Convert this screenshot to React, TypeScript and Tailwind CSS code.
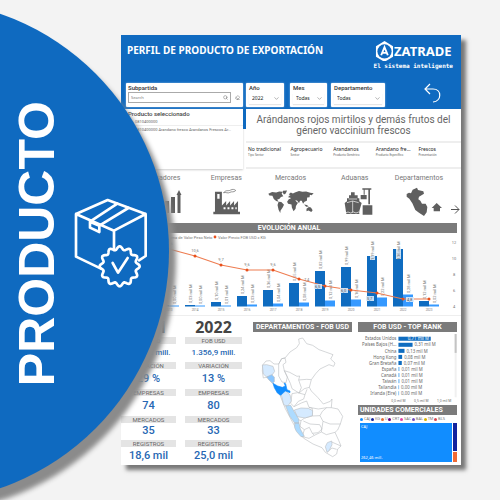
import React from "react";
import { ChevronDown, Search, Eraser } from "lucide-react";

const SANS = "font-['Noto_Sans','Open_Sans',sans-serif]";
const DIN = "font-[Roboto,'Noto_Sans',sans-serif]";

const subHeads = [
  ["No tradicional", "Tipo Sector"],
  ["Agropecuario", "Sector"],
  ["Arandanos", "Producto Genérico"],
  ["Arandano fre...", "Producto Específico"],
  ["Frescos", "Presentación"],
];

const years = [
  { year: 2012, x: 134, top: 304, light: 305, a: "0,02 mil M", b: "0,00 mil M" },
  { year: 2013, x: 159, top: 304, light: 305, a: "0,02 mil M", b: "0,00 mil M" },
  { year: 2014, x: 185, top: 304, light: 305, a: "0,03 mil M", b: "0,00 mil M" },
  { year: 2015, x: 211, top: 301, light: 305, a: "0,10 mil M", b: "0,01 mil M" },
  { year: 2016, x: 237, top: 295, light: 304, a: "0,24 mil M", b: "0,03 mil M" },
  { year: 2017, x: 263, top: 289, light: 303, a: "0,36 mil M", b: "0,04 mil M" },
  { year: 2018, x: 289, top: 282, light: 302, a: "0,55 mil M", b: "0,08 mil M" },
  { year: 2019, x: 315, top: 270, light: 300, a: "0,82 mil M", b: "0,12 mil M" },
  { year: 2020, x: 341, top: 266, light: 299, a: "0,99 mil M", b: "0,16 mil M" },
  { year: 2021, x: 367, top: 255, light: 297, a: "1,19 mil M", b: "0,22 mil M" },
  { year: 2022, x: 393, top: 248, light: 294, a: "1,36 mil M", b: "0,28 mil M" },
  { year: 2023, x: 419, top: 300, light: 304, a: "0,12 mil M", b: "0,02 mil M" },
];

const price = [
  [143, 240, ""], [169, 248, "11,6"], [195, 255, "10,6"], [221, 264, "9,7"], [247, 269, "9,6"],
  [273, 269, "9,6"], [299, 278, "7,4"], [325, 285, "6,5"], [351, 289, "6,0"],
  [377, 292, "5,7"], [403, 298, "4,8"], [429, 298, "4,8"],
] as [number, number, string][];

const ranking = [
  ["Estados Unidos", 96, "0,71 mil M"],
  ["Países Bajos (H...", 42, "0,31 mil M"],
  ["China", 18, "0,13 mil M"],
  ["Hong Kong", 11, "0,08 mil M"],
  ["Gran Bretaña", 10, "0,07 mil M"],
  ["España", 3, "0,01 mil M"],
  ["Canadá", 3, "0,01 mil M"],
  ["Taiwán", 3, "0,01 mil M"],
  ["Tailandia", 2, "0,00 mil M"],
  ["Irlanda (Eire)", 2, "0,00 mil M"],
] as [string, number, string][];

const units = [
  ["CAJ", "bg-[#118dff]"], ["KG", "bg-[#12239e]"], ["U", "bg-[#e66c37]"], ["CRT", "bg-[#6b007b]"],
  ["SAC", "bg-[#e044a7]"], ["BAL", "bg-[#744ec2]"], ["TM", "bg-[#d9b300]"], ["BLS", "bg-[#d64550]"],
];

function Title({ children, left }: { children: React.ReactNode; left?: boolean }) {
  return (
    <h2 className={`flex h-[10px] items-center whitespace-nowrap bg-[#7b7b7b] text-[7px] font-bold text-white ${left ? "justify-start pl-[2px]" : "justify-center"} ${DIN}`}>
      {children}
    </h2>
  );
}

function Filter({ id, label, value, className }: { id: string; label: string; value: string; className: string }) {
  return (
    <div className={`h-6 rounded-[1px] bg-white px-[3px] shadow-[0_0_2px_#ffffff99] ${className}`}>
      <label htmlFor={id} className={`block whitespace-nowrap text-[6px] font-medium leading-[9px] text-[#333] ${DIN}`}>{label}</label>
      <div className="mt-px grid items-center shadow-[0_1px_1px_#e6e6e6]">
        <select id={id} defaultValue={value} className="col-start-1 row-start-1 h-[11px] w-full appearance-none bg-transparent px-[3px] text-[5px] leading-[11px] text-[#222]">
          <option>{value}</option>
        </select>
        <ChevronDown className="pointer-events-none col-start-1 row-start-1 mr-px size-[7px] justify-self-end text-[#555]" strokeWidth={1.5} />
      </div>
    </div>
  );
}

function BoxIcon() {
  const pts: string[] = [];
  for (let i = 0; i < 144; i++) {
    const t = (i / 144) * Math.PI * 2;
    const r = 55 + 5 * Math.cos(12 * t);
    pts.push(`${(164 + r * Math.sin(t)).toFixed(1)},${(231 - r * Math.cos(t)).toFixed(1)}`);
  }
  return (
    <svg viewBox="27 26 222 272" className="w-[74px] shrink-0" fill="none" stroke="white" strokeWidth="8" strokeLinejoin="round" strokeLinecap="round">
      <path d="M108 238 33 202V74L128 32 242 74V200L222 213M33 74 147 124 242 74M147 124V182" />
      <path d="M157 43 75 97V115L103 128V109L190 56M75 97 103 109" />
      <polygon points={pts.join(" ")} />
      <path d="M143 221 159 250 188 206" />
    </svg>
  );
}

const BarsIcon = () => (
  <svg viewBox="0 0 42 27" className="h-[27px] w-[42px]" fill="#5f5f5f">
    <path d="M12 19h4v6h-4zM18 16h4v9h-4zM24 13h4v12h-4zM30 9h4v16h-4zM35.500 7 38 2 40.500 7H39.500V25H36.500V7z" />
  </svg>
);
const FactoryIcon = () => (
  <svg viewBox="275 175 82 79" className="h-[27px] w-[27px]" fill="#5f5f5f">
    <path d="M276 246H281V185H302V227L315 213V227L327 213V227L339 213V227L351 213V246H357V253H276Z" />
    <path d="M288 192h7v14h-7zM307 232h6v6h-6zM319 232h6v6h-6zM331 232h6v6h-6zM343 232h4v6h-4z" fill="white" />
    <path d="M307 188C315 178 321 184 328 180S341 178 344 181C338 188 332 183 326 187S314 185 307 188Z" fill="none" stroke="#5f5f5f" strokeWidth="2" />
  </svg>
);
const WorldIcon = () => (
  <svg viewBox="0 0 135 70" className="h-6 w-[46px]" fill="#5f5f5f">
    <path d="M1 11 12 6 24 7 33 4 43 5 40 11 45 18 38 20 33 26 27 28 31 34 24 32 17 26 13 17 4 16ZM44 2 56 1 52 10 47 13 43 7ZM31 34 39 35 47 43 43 51 37 60 36 67 31 58 28 44ZM61 12 67 7 73 10 79 7 91 3 101 5 112 4 124 8 134 9 128 15 123 14 122 21 115 22 114 31 107 34 103 40 99 31 94 31 91 39 86 31 80 29 84 35 88 37 82 47 81 55 75 62 70 51 69 42 59 40 56 34 61 27 67 25 65 22 60 22 61 17 66 16ZM106 42 114 44 120 48 112 49ZM113 55 120 50 126 51 131 59 127 64 119 60 113 62Z" />
  </svg>
);
const ShipIcon = () => (
  <svg viewBox="125 175 111 84" className="h-[28px] w-[37px]" fill="#5f5f5f">
    <path d="M170 188h11v9h9v9h5v9l7 5-7 24v9h-39l-5-33 7-5v-9h6v-9h6zM199 196h18v13h-18zM205 227h29v28h-29zM204 176h27v4h-4v44h-5v-44h-11v15h-3v-15h-4z" />
    <path d="M163 208h25M158 219l17-5 18 5M175 214v34M153 250l8-3 8 3 8-3 8 3 8-3 7 3" fill="none" stroke="white" strokeWidth="2" />
  </svg>
);
const PeruIcon = () => (
  <svg viewBox="308 170 138 87" className="h-[29px] w-[46px]" fill="#5f5f5f">
    <path d="M340 191 347 187 353 189 358 178 371 172 374 179 390 183 392 190 377 199 375 207 381 211 386 220 397 220 402 230 400 246 392 257 377 247 366 239 357 219 348 205 340 199Z" />
    <path d="M415 233 430 218 446 233H440V243H421V233Z" />
  </svg>
);

function PeruMap() {
  return (
    <svg viewBox="9 52 297 390" className="block w-full" fill="none" stroke="#b9bcc0" strokeWidth="1.8" strokeLinejoin="round" aria-label="Mapa del Perú por departamentos">
      <path d="M38 151 48 139 60 138 72 148 86 148 95 132 105 130 120 112 140 99 148 87 146 73 158 70 170 87 188 92 207 105 227 112 249 120 242 133 255 145 251 155 237 150 210 163 197 177 184 195 178 218 184 229 203 248 220 268 241 260 246 253 244 279 264 283 278 305 271 328 263 346 255 353 266 377 273 394 263 403 260 418 248 426 226 413 216 399 189 388 160 370 139 343 124 316 106 282 91 244 70 208 51 187 40 190 37 169Z" fill="white" />
      <path d="M86 148 95 132 105 130 108 143 99 150 103 168 112 187 108 204 96 202 86 184ZM103 168 119 173 141 185 149 184 146 196 154 219 147 235 126 222 121 206 112 187ZM146 196 170 194 184 195M147 235 163 222 178 218M126 237 143 234 165 240 161 253 145 260 132 276 122 266ZM165 240 171 224M132 276 154 265 170 259 177 278 205 283 230 279 244 279M177 278 187 281 187 304 210 303 217 290 230 279M210 303 219 320 240 328 271 328M187 304 164 310 153 318 140 313M153 318 150 335 163 345 157 366 177 371 193 362 214 352 229 360 255 353M163 345 178 338 187 356 193 362M160 319 180 328 209 330 216 343 204 354 187 356M219 320 214 352M245 382 273 394M232 412 246 400 260 404" />
      <path d="M37 151 50 150 69 155 74 170 65 183 50 187 40 178ZM91 229 106 228 120 240 124 259 113 275 101 270ZM133 286 153 280 175 281 188 288 187 303 165 310 142 306ZM226 396 232 384 245 379 246 390 238 407 231 413Z" fill="#d5eaff" />
      <path d="M50 187 65 180 73 187 73 201 68 206 57 196Z" fill="#8cc7ff" />
      <path d="M107 274 122 272 132 290 146 313 147 325 134 325 119 304ZM134 325 147 325 151 343 163 365 153 366 139 350 134 339Z" fill="#addbff" />
      <path d="M69 206 83 214 97 218 106 214 102 205 107 207 111 225 120 229 120 234 106 229 92 242 82 235 73 219Z" fill="#118dff" stroke="#118dff" />
    </svg>
  );
}

function EvolutionChart() {
  return (
    <svg viewBox="121 232 340 82" className="block w-full font-[Roboto,sans-serif]" fontSize="4" fill="#777" aria-label="Evolución anual">
      <circle cx="167" cy="236" r="1.2" fill="#3599ff" />
      <text x="167" y="237.5">Suma de Valor Peso Neto</text>
      <circle cx="215" cy="236" r="1.4" fill="#e8501c" />
      <text x="218" y="237.5">Valor Precio FOB USD x KG</text>
      {[12, 10, 8, 6, 4].map((n, i) => (
        <text key={n} x="454" y={243 + i * 16} textAnchor="middle">{n}</text>
      ))}
      {years.map((d) => (
        <g key={d.year}>
          <rect x={d.x} y={d.top} width="10" height={305.5 - d.top} fill="#0f6cc0" />
          <rect x={d.x + 10} y={d.light - 0.5} width="10" height={306 - d.light} fill="#3599ff" />
          {d.year > 2020 && d.year < 2023 && <rect x={d.x + 3} y={d.top} width="5" height={d.year === 2022 ? 10 : 4} fill="#cfe1f2" />}
          <text transform={`translate(${d.x + 7} ${d.year === 2022 || d.year === 2021 ? 259 : d.top - 2}) rotate(-90)`}>{d.a}</text>
          <text transform={`translate(${d.x + 17} ${d.light - 2}) rotate(-90)`}>{d.b}</text>
          <text x={d.x + 10} y="310" textAnchor="middle" fontSize="3">{d.year}</text>
        </g>
      ))}
      <polyline points={price.map((p) => `${p[0]},${p[1]}`).join(" ")} fill="none" stroke="#ee7c50" strokeWidth="1.1" />
      {price.map(([x, y, t], i) => (
        <g key={x}>
          <circle cx={x} cy={y} r="1.5" fill="#e8501c" />
          {i > 6 && i < 11 && <rect x={i === 10 ? x + 3 : x - 11} y={i === 9 ? 295 : y - 2} width="8" height="5" fill="#dcebfa" opacity="0.9" />}
          {i === 6 && <text x={x + 5} y={y + 2}>{t}</text>}
          {i < 6 && <text x={x} y={y - 4} textAnchor="middle">{t}</text>}
          {i > 6 && i < 11 && <text x={i === 10 ? x + 4 : x - 10} y={i === 9 ? 299 : y + 2} fill="#555">{t}</text>}
        </g>
      ))}
    </svg>
  );
}

function RankChart() {
  return (
    <svg viewBox="0 52 306 218" className="block w-full font-['Noto_Sans',sans-serif]" fontSize="13" fill="#666" aria-label="FOB USD top rank">
      {ranking.map(([name, w, v], i) => (
        <g key={name}>
          <text x="126" y={77 + i * 18} textAnchor="end">{name}</text>
          <rect x="132" y={66 + i * 18} width={w} height="12" fill={i < 5 ? "#0f6cc0" : "#5aabf0"} />
          <text x={i === 0 ? 160 : 138 + w} y={77 + i * 18} fill={i === 0 ? "white" : "#666"}>{v}</text>
        </g>
      ))}
      <g fontSize="10" textAnchor="middle">
        <text x="132" y="259">0,0 mil M</text>
        <text x="200" y="259">0,5 mil M</text>
        <text x="268" y="259">1,0 mil M</text>
      </g>
      <rect x="299" y="58" width="6" height="188" fill="#f0f0f0" />
      <rect x="299" y="58" width="6" height="56" fill="#c4c4c4" />
    </svg>
  );
}

const labels = ["FOB USD", "VARIACIÓN", "EMPRESAS", "MERCADOS", "REGISTROS"];
const heights = ["h-[25px]", "h-[27px]", "h-[27px]", "h-[24px]", "h-[26px]"];

function YearColumn({ year, values }: { year: string; values: string[] }) {
  return (
    <section className={`flex flex-col ${DIN}`}>
      <h2 className={`h-[18px] text-center text-[16px] font-bold leading-[18px] text-[#444] ${SANS}`}>{year}</h2>
      <dl className="pt-px">
        {labels.map((l, i) => (
          <div key={l} className={`flex flex-col ${heights[i]}`}>
            <dt className="h-[7px] bg-[#e4e4e4] text-center text-[6px] leading-[7px] text-[#666]">{l}</dt>
            <dd className={`flex grow items-center justify-center whitespace-nowrap font-medium text-[#2667b3] ${i === 0 ? "text-[8px]" : "text-[11px]"}`}>{values[i]}</dd>
          </div>
        ))}
      </dl>
    </section>
  );
}

const nav = [
  { name: "Indicadores", icon: <BarsIcon /> },
  { name: "Empresas", icon: <FactoryIcon /> },
  { name: "Mercados", icon: <WorldIcon /> },
  { name: "Aduanas", icon: <ShipIcon /> },
  { name: "Departamentos", icon: <PeruIcon /> },
];

export default function App() {
  return (
    <main className="relative min-h-screen overflow-hidden bg-[#f3f3f3] pb-[34px] pl-[121px] pr-[39px] pt-[35px]">
      <article className={`bg-white shadow-[5px_5px_4px_#777] ${SANS}`}>
        <header className="bg-[#0f6ac0]">
          <div className="flex h-12 justify-between pl-[6px] pr-2">
            <h1 className="pt-2 text-[10px] font-bold leading-[14px] text-white">PERFIL DE PRODUCTO DE EXPORTACIÓN</h1>
            <div className="flex flex-col items-center text-white">
              <div className="mt-[5px] flex h-[22px] items-center text-[13px] font-bold leading-none">
                <svg viewBox="0 0 20 22" className="w-[19px]" aria-label="A">
                  <path d="M10 0 19 5.5V16.5L10 22 1 16.5V5.5Z" fill="white" />
                  <circle cx="10" cy="11" r="7.5" fill="#0f6ac0" />
                  <path d="M6.5 15 10 6.5 13.5 15M8 12.500H12" fill="none" stroke="white" strokeWidth="2" />
                </svg>
                <span>ZATRADE</span>
              </div>
              <p className="whitespace-nowrap font-['DejaVu_Sans_Mono',monospace] text-[6px] font-bold leading-[8px]">El sistema inteligente</p>
            </div>
          </div>
          <div className="flex h-[26px] items-start pl-[5px]">
            <div className="h-6 w-[117px] rounded-[1px] bg-white px-[2px] shadow-[0_0_2px_#ffffff99]">
              <label htmlFor="subpartida" className={`block text-[6px] font-medium leading-[9px] text-[#333] ${DIN}`}>Subpartida</label>
              <div className="flex items-center gap-1">
                <div className="flex h-[11px] w-[103px] items-center border border-[#aaa] px-[2px]">
                  <input id="subpartida" placeholder="Search" className="min-w-0 grow text-[4px] leading-none outline-none placeholder:text-[#777]" />
                  <Search className="size-[5px] text-[#555]" />
                </div>
                <Eraser className="size-[5px] text-[#555]" />
              </div>
            </div>
            <Filter id="anio" label="Año" value="2022" className="ml-[3px] w-[38px]" />
            <Filter id="mes" label="Mes" value="Todas" className="ml-[6px] w-[37px]" />
            <Filter id="departamento" label="Departamento" value="Todas" className="ml-1 w-[54px]" />
            <button aria-label="Volver" className="ml-auto mr-5">
              <svg viewBox="0 0 17 20" className="h-5 w-[17px]" fill="none" stroke="white" strokeWidth="1.2">
                <path d="M6 1 1 6 6 11M1 6H9C18 6 18 18 9 19" />
              </svg>
            </button>
          </div>
        </header>

        <div className="flex h-[60px]">
          <section className={`w-[122px] pl-[7px] pt-px shadow-[0_1px_2px_#ccc] ${DIN}`}>
            <h2 className="text-[6px] font-medium leading-[8px] text-[#444]">Producto seleccionado</h2>
            <ul className="whitespace-nowrap text-[4px] leading-[7px] text-[#666]">
              <li className="border-b border-[#eee] pl-[7px]">0810400000</li>
              <li className="pl-[7px]">0810400000 Arandano fresco Arandanos Frescos Ar...</li>
            </ul>
          </section>
          <div className="h-[20px] w-[3px] bg-[#0f6ac0]" />
          <section className="flex min-w-0 grow flex-col">
            <h2 className={`flex h-[34px] items-center justify-center border-b-2 border-[#eee] px-1 text-center text-[10px] leading-[11px] text-[#666] ${DIN}`}>
              Arándanos rojos mirtilos y demás frutos del<br />género vaccinium frescos
            </h2>
            <dl className="grid grow grid-cols-5 border-b-2 border-[#eee] pl-[2px] pt-[3px]">
              {subHeads.map(([a, b]) => (
                <div key={a} className="whitespace-nowrap">
                  <dt className="text-[5px] leading-[7px] text-[#222]">{a}</dt>
                  <dd className="text-[3px] leading-[4px] text-[#555]">{b}</dd>
                </div>
              ))}
            </dl>
          </section>
        </div>

        <nav className="flex h-[54px] items-center pl-[9px] pt-[3px]">
          {nav.map((n) => (
            <button key={n.name} className={`flex h-full flex-1 flex-col items-center gap-[3px] text-[7px] leading-[12px] text-[#777] ${DIN}`}>
              <span>{n.name}</span>
              <span className="flex h-[29px] items-center">{n.icon}</span>
            </button>
          ))}
          <button aria-label="Siguiente" className="pr-px pt-6">
            <svg viewBox="0 0 9 9" className="size-[9px]" fill="none" stroke="#555"><path d="M0 4.500H8M4 0.500 8 4.500 4 8.500" /></svg>
          </button>
        </nav>

        <section className="pr-1">
          <Title>EVOLUCIÓN ANUAL</Title>
        </section>
        <EvolutionChart />

        <div className="flex h-[150px] border-t border-[#eee] pt-[2px]">
          <div className="w-[55px] shrink-0"><YearColumn year="2021" values={["1.200,3 mill.", "29 %", "74", "35", "18,6 mil"]} /></div>
          <div className="ml-[9px] w-[57px] shrink-0"><YearColumn year="2022" values={["1.356,9 mill.", "13 %", "80", "33", "25,0 mil"]} /></div>
          <section className="ml-[11px] mt-1 w-[99px] shrink-0">
            <Title>DEPARTAMENTOS - FOB USD</Title>
            <PeruMap />
          </section>
          <section className="ml-[2px] mt-1 flex min-w-0 grow flex-col pr-1">
            <div className="pl-1"><Title>FOB USD - TOP RANK</Title></div>
            <RankChart />
            <div className="pl-1">
              <Title left>UNIDADES COMERCIALES</Title>
              <ul className="flex h-[8px] items-center justify-between pl-[2px] pr-3 text-[4px] leading-none text-[#777]">
                {units.map(([u, c]) => (
                  <li key={u} className="flex items-center gap-px"><span className={`size-[3px] rounded-full ${c}`} />{u}</li>
                ))}
              </ul>
            </div>
            <div className="flex h-[39px] gap-px pl-[6px]">
              <div className="flex grow flex-col justify-between bg-[#118dff] p-px text-[4px] leading-[6px] text-white"><span>CAJ</span><span>262,46 mill.</span></div>
              <div className="flex w-1 flex-col gap-px"><div className="h-[28px] bg-[#12239e]" /><div className="grow bg-[#f06a35]" /></div>
            </div>
          </section>
        </div>
      </article>

      <aside className="absolute -left-[333px] top-0 flex size-[502px] items-center justify-end rounded-full bg-[#0f6ac0] pb-[15px] shadow-[7px_10px_5px_#8b8b8b]">
        <div className="flex items-center gap-[9px] pr-[21px]">
          <p className="rotate-180 font-['Liberation_Sans',Arial,sans-serif] text-[50px] font-bold leading-[56px] text-white [writing-mode:vertical-rl]">PRODUCTO</p>
          <BoxIcon />
        </div>
      </aside>
    </main>
  );
}
